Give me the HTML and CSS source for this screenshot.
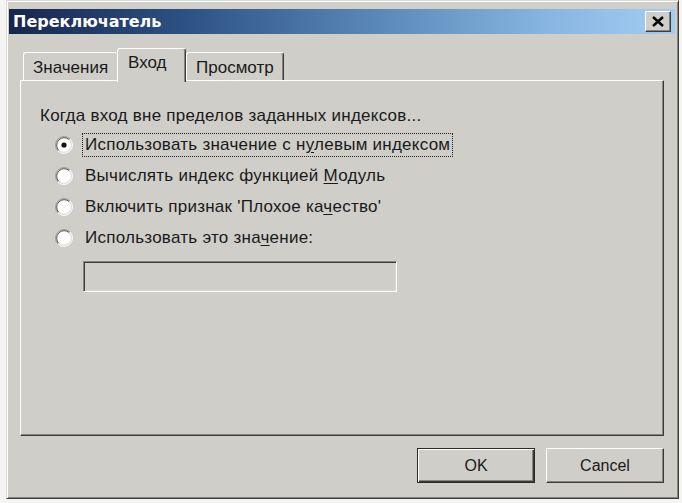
FILE: index.html
```html
<!DOCTYPE html>
<html lang="ru">
<head>
<meta charset="utf-8">
<title>Переключатель</title>
<link rel="stylesheet" href="styles.css">
</head>
<body>
<div class="window">
  <div class="titlebar">
    <span class="title">Переключатель</span>
    <button class="close" aria-label="Закрыть">
      <svg width="12" height="11" viewBox="0 0 12 11"><path d="M1 1 L11 10 M11 1 L1 10" stroke="#000" stroke-width="2.4" fill="none"/></svg>
    </button>
  </div>
  <div class="content">
    <div class="tabs">
      <div class="tab t1">Значения</div>
      <div class="tab t2 active">Вход</div>
      <div class="tab t3">Просмотр</div>
    </div>
    <div class="panel">
      <div class="caption">Когда вход вне пределов заданных индексов...</div>
      <div class="options">
        <div class="option">
          <svg class="radio" width="18" height="18" viewBox="0 0 18 18">
            <circle cx="9" cy="9" r="7.8" fill="#fff"/>
            <path d="M2.99 15.01 A8.5 8.5 0 0 1 15.01 2.99" stroke="#9a9994" fill="none"/>
            <path d="M2.99 15.01 A8.5 8.5 0 0 0 15.01 2.99" stroke="#ffffff" fill="none"/>
            <path d="M3.7 14.3 A7.5 7.5 0 0 1 14.3 3.7" stroke="#55544f" fill="none"/>
            <path d="M3.7 14.3 A7.5 7.5 0 0 0 14.3 3.7" stroke="#dedcd7" fill="none"/>
            <circle cx="9" cy="9" r="2.6" fill="#111"/>
          </svg>
          <span class="label focus">Использовать значение с н<u>у</u>левым индексом</span>
        </div>
        <div class="option">
          <svg class="radio" width="18" height="18" viewBox="0 0 18 18">
            <circle cx="9" cy="9" r="7.8" fill="#fff"/>
            <path d="M2.99 15.01 A8.5 8.5 0 0 1 15.01 2.99" stroke="#9a9994" fill="none"/>
            <path d="M2.99 15.01 A8.5 8.5 0 0 0 15.01 2.99" stroke="#ffffff" fill="none"/>
            <path d="M3.7 14.3 A7.5 7.5 0 0 1 14.3 3.7" stroke="#55544f" fill="none"/>
            <path d="M3.7 14.3 A7.5 7.5 0 0 0 14.3 3.7" stroke="#dedcd7" fill="none"/>
          </svg>
          <span class="label">Вычислять индекс функцией <u>М</u>одуль</span>
        </div>
        <div class="option">
          <svg class="radio" width="18" height="18" viewBox="0 0 18 18">
            <circle cx="9" cy="9" r="7.8" fill="#fff"/>
            <path d="M2.99 15.01 A8.5 8.5 0 0 1 15.01 2.99" stroke="#9a9994" fill="none"/>
            <path d="M2.99 15.01 A8.5 8.5 0 0 0 15.01 2.99" stroke="#ffffff" fill="none"/>
            <path d="M3.7 14.3 A7.5 7.5 0 0 1 14.3 3.7" stroke="#55544f" fill="none"/>
            <path d="M3.7 14.3 A7.5 7.5 0 0 0 14.3 3.7" stroke="#dedcd7" fill="none"/>
          </svg>
          <span class="label">Включить признак 'Плохое ка<u>ч</u>ество'</span>
        </div>
        <div class="option">
          <svg class="radio" width="18" height="18" viewBox="0 0 18 18">
            <circle cx="9" cy="9" r="7.8" fill="#fff"/>
            <path d="M2.99 15.01 A8.5 8.5 0 0 1 15.01 2.99" stroke="#9a9994" fill="none"/>
            <path d="M2.99 15.01 A8.5 8.5 0 0 0 15.01 2.99" stroke="#ffffff" fill="none"/>
            <path d="M3.7 14.3 A7.5 7.5 0 0 1 14.3 3.7" stroke="#55544f" fill="none"/>
            <path d="M3.7 14.3 A7.5 7.5 0 0 0 14.3 3.7" stroke="#dedcd7" fill="none"/>
          </svg>
          <span class="label">Использовать это зна<u>ч</u>ение:</span>
        </div>
      </div>
      <div class="field"></div>
    </div>
    <div class="buttons">
      <button class="btn default">OK</button>
      <button class="btn">Cancel</button>
    </div>
  </div>
</div>
</body>
</html>
```
FILE: styles.css
```css
html, body {
  margin: 0;
  padding: 0;
  background: #f4f4f2;
}
body {
  font-family: "Liberation Sans", Arial, sans-serif;
  font-size: 17px;
  color: #1a1a1a;
}
.window {
  margin-left: 6px;
  width: 673px;
  height: 499px;
  box-sizing: border-box;
  background: #cfcec9;
  border: 1px solid;
  border-color: #dcdbd6 #3c3c3a #3c3c3a #dcdbd6;
  box-shadow: inset 1px 1px #ffffff, inset -1px -1px #85847f;
  padding: 8px 3px 0 2px;
  display: flex;
  flex-direction: column;
}
.titlebar {
  height: 25px;
  display: flex;
  align-items: center;
  justify-content: space-between;
  padding-left: 4px;
  background: linear-gradient(to right, #17264c 0%, #2a4f80 25%, #5a88b6 55%, #86b4e0 80%, #a3cdf3 100%);
}
.title {
  font-family: "DejaVu Sans", Verdana, sans-serif;
  font-weight: bold;
  font-size: 16px;
  color: #fff;
}
.close {
  width: 26px;
  height: 21px;
  margin-right: 4px;
  padding: 0;
  display: flex;
  align-items: center;
  justify-content: center;
  background: #cfcec9;
  border: 1px solid;
  border-color: #ffffff #3c3c3a #3c3c3a #ffffff;
  box-shadow: inset -1px -1px #85847f;
}
.content {
  flex: 1;
  display: flex;
  flex-direction: column;
  padding: 14px 11px 0 11px;
}
.tabs {
  display: flex;
  align-items: flex-end;
  height: 32px;
  padding-left: 3px;
}
.tab {
  box-sizing: border-box;
  height: 28px;
  border-top: 1px solid #fff;
  border-left: 1px solid #fff;
  border-right: 1px solid #3c3c3a;
  border-radius: 3px 3px 0 0;
  box-shadow: inset -1px 0 #85847f;
  padding: 5px 0 0 9px;
  background: #cfcec9;
  color: #1a1a1a;
}
.t1 { width: 94px; border-right: none; box-shadow: none; }
.t2 { width: 69px; }
.t3 { width: 98px; border-left: 1px solid #fff; }
.tab.active {
  height: 34px;
  margin-bottom: -2px;
  position: relative;
  z-index: 1;
  padding: 4px 0 0 10px;
}
.panel {
  height: 356px;
  box-sizing: border-box;
  border: 1px solid;
  border-color: #ffffff #3c3c3a #3c3c3a #ffffff;
  box-shadow: inset -1px -1px #85847f;
  padding: 25px 0 0 19px;
}
.caption {
  line-height: 20px;
  letter-spacing: 0.25px;
}
.options {
  margin-top: 3px;
  padding-left: 15px;
}
.option {
  height: 31px;
  display: flex;
  align-items: center;
}
.radio {
  flex: none;
}
.label {
  margin-left: 9px;
  padding: 2px 2px 2px 2px;
  border: 1px dotted transparent;
  line-height: 18px;
  letter-spacing: 0.25px;
}
.label.focus {
  border-color: #222;
}
.label u {
  text-underline-offset: 2px;
}
.field {
  margin: 8px 0 0 43px;
  width: 314px;
  height: 31px;
  box-sizing: border-box;
  border: 1px solid;
  border-color: #85847f #ffffff #ffffff #85847f;
  box-shadow: inset 1px 1px #3c3c3a, inset -1px -1px #d9d8d3;
}
.buttons {
  display: flex;
  justify-content: flex-end;
  gap: 11px;
  margin-top: 12px;
}
.btn {
  width: 118px;
  height: 35px;
  box-sizing: border-box;
  font-family: "Liberation Sans", Arial, sans-serif;
  font-size: 16px;
  color: #1a1a1a;
  background: #cfcec9;
  border: 1px solid;
  border-color: #ffffff #3c3c3a #3c3c3a #ffffff;
  box-shadow: inset -1px -1px #85847f;
  padding: 0;
}
.btn.default {
  border: 1px solid #2a2a28;
  box-shadow: inset 1px 1px #ffffff, inset -1px -1px #3c3c3a, inset -2px -2px #85847f;
}
```
